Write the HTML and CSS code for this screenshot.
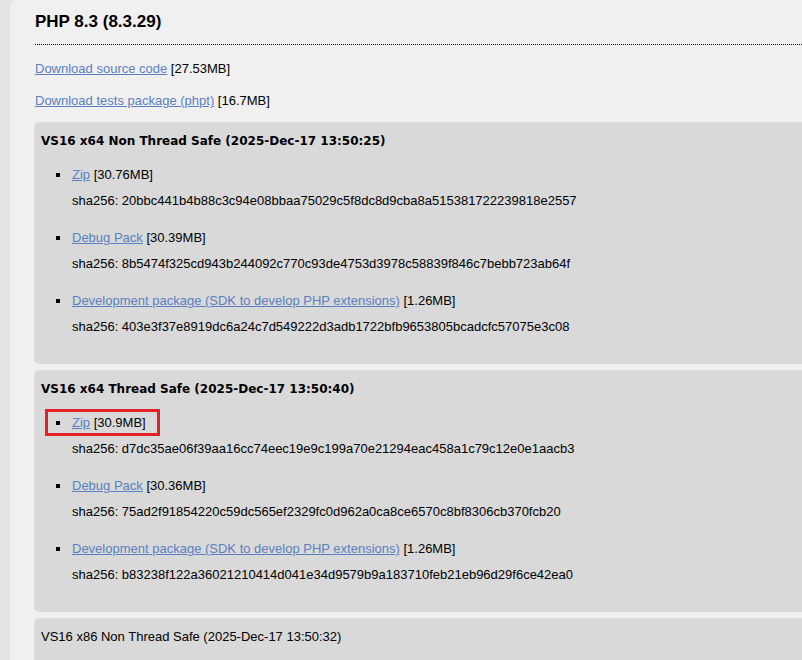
FILE: index.html
```html
<!DOCTYPE html>
<html lang="en">
<head>
<meta charset="utf-8">
<title>PHP 8.3 downloads</title>
<link rel="stylesheet" href="styles.css">
</head>
<body>
<div class="page">
  <h2 class="release-title">PHP 8.3 (8.3.29)</h2>
  <p class="src"><a href="#">Download source code</a> [27.53MB]</p>
  <p class="src"><a href="#">Download tests package (phpt)</a> [16.7MB]</p>

  <div class="build">
    <h4 class="build-title">VS16 x64 Non Thread Safe (2025-Dec-17 13:50:25)</h4>
    <ul class="files">
      <li>
        <p class="pkg"><a href="#">Zip</a> [30.76MB]</p>
        <p class="sha">sha256: 20bbc441b4b88c3c94e08bbaa75029c5f8dc8d9cba8a515381722239818e2557</p>
      </li>
      <li>
        <p class="pkg"><a href="#">Debug Pack</a> [30.39MB]</p>
        <p class="sha">sha256: 8b5474f325cd943b244092c770c93de4753d3978c58839f846c7bebb723ab64f</p>
      </li>
      <li>
        <p class="pkg"><a href="#">Development package (SDK to develop PHP extensions)</a> [1.26MB]</p>
        <p class="sha">sha256: 403e3f37e8919dc6a24c7d549222d3adb1722bfb9653805bcadcfc57075e3c08</p>
      </li>
    </ul>
  </div>

  <div class="build">
    <h4 class="build-title">VS16 x64 Thread Safe (2025-Dec-17 13:50:40)</h4>
    <ul class="files">
      <li class="marked">
        <p class="pkg"><a href="#">Zip</a> [30.9MB]</p>
        <p class="sha">sha256: d7dc35ae06f39aa16cc74eec19e9c199a70e21294eac458a1c79c12e0e1aacb3</p>
      </li>
      <li>
        <p class="pkg"><a href="#">Debug Pack</a> [30.36MB]</p>
        <p class="sha">sha256: 75ad2f91854220c59dc565ef2329fc0d962a0ca8ce6570c8bf8306cb370fcb20</p>
      </li>
      <li>
        <p class="pkg"><a href="#">Development package (SDK to develop PHP extensions)</a> [1.26MB]</p>
        <p class="sha">sha256: b83238f122a36021210414d041e34d9579b9a183710feb21eb96d29f6ce42ea0</p>
      </li>
    </ul>
  </div>

  <div class="build">
    <h4 class="build-title plain">VS16 x86 Non Thread Safe (2025-Dec-17 13:50:32)</h4>
  </div>
</div>
</body>
</html>
```
FILE: styles.css
```css
html, body {
  margin: 0;
  padding: 0;
  overflow: hidden;
  height: 660px;
}

body {
  background: #e4e4e4;
  font-family: "Liberation Sans", Arial, sans-serif;
  font-size: 13px;
  line-height: 16px;
  color: #000;
}

.page {
  margin-left: 10px;
  margin-right: -20px;
  background: #f0f0f0;
  border-top-left-radius: 6px;
  padding: 12px 0 20px 24px;
  min-height: 700px;
}

.release-title {
  margin: 0 0 0 1px;
  font-size: 17px;
  line-height: 20px;
  font-weight: bold;
  padding-bottom: 12px;
  border-bottom: 1px dotted #000;
}

.src {
  margin: 16px 0 0 1px;
}

.src + .src {
  margin-top: 16px;
}

a {
  color: #5b7fc0;
  text-decoration: underline;
}

.build {
  background: #d9d9d9;
  border-radius: 5px;
  padding: 11px 7px 29px;
  margin-bottom: 6px;
}

.src + .build {
  margin-top: 13px;
}

.build-title {
  margin: 0;
  font-family: "DejaVu Sans", Verdana, sans-serif;
  font-size: 12px;
  line-height: 16px;
  font-weight: bold;
}

.build-title.plain {
  font-family: "Liberation Sans", Arial, sans-serif;
  font-size: 13px;
  font-weight: normal;
  padding-bottom: 40px;
}

.files {
  list-style: none;
  margin: 18px 0 0;
  padding: 0 0 0 31px;
}

.files li {
  position: relative;
}

.files li + li {
  margin-top: 21px;
}

.pkg,
.sha {
  margin: 0;
}

.sha {
  margin-top: 10px;
}

.pkg::before {
  content: "";
  display: inline-block;
  width: 4px;
  height: 4px;
  background: #000;
  margin-left: -16px;
  margin-right: 12px;
  vertical-align: 2px;
}

.marked::after {
  content: "";
  position: absolute;
  left: -27px;
  top: -6px;
  width: 115px;
  height: 27px;
  box-sizing: border-box;
  border: 3px solid #e3202a;
}
```
